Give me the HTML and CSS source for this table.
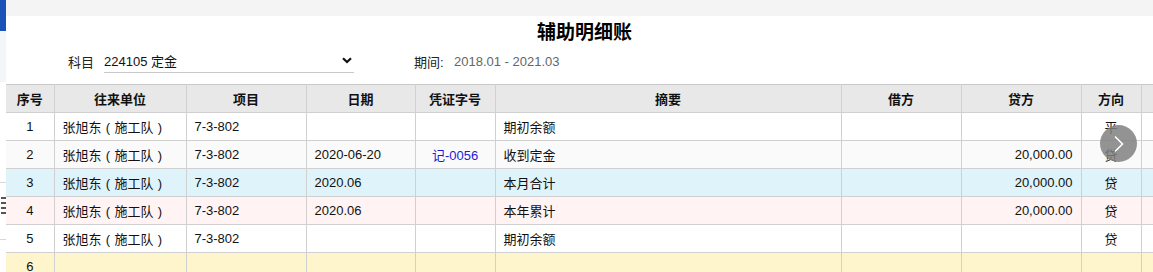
FILE: index.html
```html
<!DOCTYPE html>
<html lang="zh">
<head>
<meta charset="utf-8">
<title>辅助明细账</title>
<link rel="stylesheet" href="styles.css">
</head>
<body>
<div class="page">
  <aside class="side">
    <div class="side-top"></div>
    <div class="side-mid"></div>
    <div class="side-low">
      <div class="side-line"></div>
      <div class="side-icon"><span></span><span></span><span></span><span></span></div>
      <div class="side-line second"></div>
    </div>
  </aside>
  <main class="main">
    <div class="topband"></div>
    <h1 class="title">辅助明细账</h1>
    <div class="filters">
      <label class="flabel">科目</label>
      <div class="select">
        <span>224105 定金</span>
        <svg class="chev" width="10" height="7" viewBox="0 0 10 7"><path d="M1 1.2 L5 5 L9 1.2" fill="none" stroke="#111" stroke-width="2.2"/></svg>
      </div>
      <span class="plabel">期间:</span>
      <span class="pvalue">2018.01 - 2021.03</span>
    </div>
    <div class="tablewrap">
      <table class="grid">
        <colgroup>
          <col class="c1"><col class="c2"><col class="c3"><col class="c4"><col class="c5"><col class="c6"><col class="c7"><col class="c8"><col class="c9"><col class="c10">
        </colgroup>
        <thead>
          <tr><th>序号</th><th>往来单位</th><th>项目</th><th>日期</th><th>凭证字号</th><th>摘要</th><th>借方</th><th>贷方</th><th>方向</th><th></th></tr>
        </thead>
        <tbody>
          <tr class="r-white"><td class="ctr">1</td><td>张旭东<span class="fw">(</span>施工队<span class="fw">)</span></td><td>7-3-802</td><td></td><td></td><td>期初余额</td><td></td><td></td><td class="ctr">平</td><td></td></tr>
          <tr class="r-gray"><td class="ctr">2</td><td>张旭东<span class="fw">(</span>施工队<span class="fw">)</span></td><td>7-3-802</td><td>2020-06-20</td><td class="ctr link">记-0056</td><td>收到定金</td><td></td><td class="num">20,000.00</td><td class="ctr">贷</td><td></td></tr>
          <tr class="r-blue"><td class="ctr">3</td><td>张旭东<span class="fw">(</span>施工队<span class="fw">)</span></td><td>7-3-802</td><td>2020.06</td><td></td><td>本月合计</td><td></td><td class="num">20,000.00</td><td class="ctr">贷</td><td></td></tr>
          <tr class="r-pink"><td class="ctr">4</td><td>张旭东<span class="fw">(</span>施工队<span class="fw">)</span></td><td>7-3-802</td><td>2020.06</td><td></td><td>本年累计</td><td></td><td class="num">20,000.00</td><td class="ctr">贷</td><td></td></tr>
          <tr class="r-white"><td class="ctr">5</td><td>张旭东<span class="fw">(</span>施工队<span class="fw">)</span></td><td>7-3-802</td><td></td><td></td><td>期初余额</td><td></td><td></td><td class="ctr">贷</td><td></td></tr>
          <tr class="r-yellow"><td class="ctr">6</td><td></td><td></td><td></td><td></td><td></td><td></td><td></td><td></td><td></td></tr>
        </tbody>
      </table>
      <button class="nextbtn" aria-label="下一页">
        <svg width="12" height="18" viewBox="0 0 12 18"><path d="M2 1.5 L9.5 9 L2 16.5" fill="none" stroke="#fff" stroke-width="1.6"/></svg>
      </button>
    </div>
  </main>
</div>
</body>
</html>
```

FILE: styles.css
```css
html, body {
  margin: 0;
  padding: 0;
  background: #fff;
  overflow: hidden;
}
body {
  font-family: "Liberation Sans", Arial, "Noto Sans CJK SC", sans-serif;
  font-size: 13px;
  color: #111;
}
.page {
  display: flex;
  width: 1153px;
  height: 272px;
  overflow: hidden;
}
.side {
  width: 6px;
  flex: none;
  display: flex;
  flex-direction: column;
}
.side-top {
  height: 31px;
  background: #1c52b6;
}
.side-mid {
  height: 51px;
  background: #f3f5f9;
}
.side-low {
  flex: 1;
  background: #fff;
  padding-top: 100px;
  display: flex;
  flex-direction: column;
}
.side-line {
  height: 1px;
  background: #d8d8d8;
}
.side-line.second {
  margin-top: 22px;
}
.side-icon {
  margin-top: 14px;
  height: 20px;
  display: flex;
  flex-direction: column;
  gap: 3px;
  padding-left: 1px;
}
.side-icon span {
  height: 2px;
  background: #555;
}
.main {
  flex: 1;
  min-width: 0;
  display: flex;
  flex-direction: column;
}
.topband {
  height: 16px;
  background: #f4f4f4;
}
.title {
  margin: 0;
  height: 30px;
  line-height: 30px;
  font-size: 19px;
  font-weight: bold;
  text-align: center;
  padding-left: 10px;
  font-family: "Noto Sans CJK SC", sans-serif;
  color: #000;
}
.filters {
  height: 38px;
  box-sizing: border-box;
  display: flex;
  align-items: center;
  padding-left: 62px;
  padding-bottom: 8px;
}
.flabel {
  width: 36px;
  color: #222;
}
.select {
  width: 250px;
  height: 24px;
  box-sizing: border-box;
  border-bottom: 1px solid #c8c8c8;
  display: flex;
  align-items: center;
  justify-content: space-between;
  padding-right: 2px;
  color: #111;
}
.chev {
  display: block;
}
.plabel {
  margin-left: 60px;
  width: 40px;
  color: #222;
}
.pvalue {
  color: #666;
}
.tablewrap {
  position: relative;
  flex: 1;
  overflow: hidden;
}
.grid {
  border-collapse: collapse;
  table-layout: fixed;
  width: 1160px;
}
.c1 { width: 48px; }
.c2 { width: 132px; }
.c3 { width: 120px; }
.c4 { width: 109px; }
.c5 { width: 80px; }
.c6 { width: 346px; }
.c7 { width: 120px; }
.c8 { width: 120px; }
.c9 { width: 60px; }
.c10 { width: 25px; }
.grid th, .grid td {
  height: 28px;
  box-sizing: border-box;
  border: 1px solid #d0d0d0;
  padding: 0 8px;
  white-space: nowrap;
  overflow: hidden;
}
.grid tr:first-child th {
  border-top: 1px solid #c8c8c8;
}
.grid th:first-child, .grid td:first-child {
  border-left: none;
}
.grid th {
  background: #e8e8e8;
  font-weight: bold;
  text-align: center;
  color: #111;
}
.fw {
  display: inline-block;
  width: 13px;
  text-align: center;
}
.grid td.ctr { text-align: center; }
.grid td.num { text-align: right; }
.grid td.link { color: #1a1ad8; }
.r-white td { background: #fff; }
.r-gray td { background: #fafafa; }
.r-blue td { background: #dff3fb; }
.r-pink td { background: #fff4f3; }
.r-yellow td { background: #fff5cc; }
.nextbtn {
  position: absolute;
  left: 1094px;
  top: 41px;
  width: 37px;
  height: 37px;
  border-radius: 50%;
  border: none;
  padding: 0;
  background: rgba(128, 128, 128, 0.85);
  display: flex;
  align-items: center;
  justify-content: center;
}
```
